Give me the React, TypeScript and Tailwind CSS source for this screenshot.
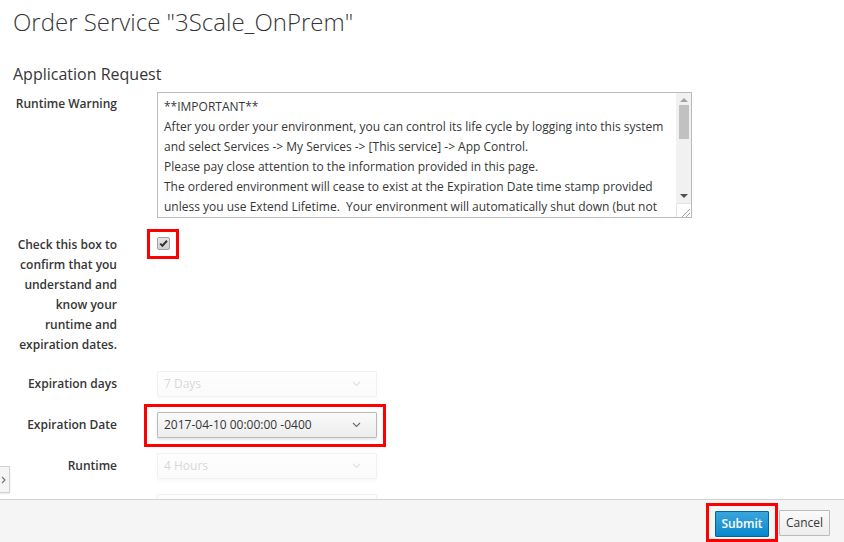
import React from "react";

function Chevron({ color = "#6b6b6b" }: { color?: string }) {
  return (
    <svg width="9" height="6" viewBox="0 0 9 6" fill="none">
      <path d="M1 1l3.5 3.5L8 1" stroke={color} strokeWidth="1.1" />
    </svg>
  );
}

function Select({ value, faded }: { value: string; faded?: boolean }) {
  return (
    <div
      className={
        "flex h-[26px] w-[220px] items-center justify-between rounded-[1px] border border-[#bbbbbb] bg-gradient-to-b from-[#fafafa] to-[#ededed] pl-[6px] pr-[15px] text-[12px] text-[#363636] shadow-[0_2px_3px_rgba(3,3,3,0.1)] " +
        (faded ? "opacity-20" : "")
      }
    >
      <span>{value}</span>
      <Chevron />
    </div>
  );
}

export default function App() {
  const lines = [
    "**IMPORTANT**",
    "After you order your environment, you can control its life cycle by logging into this system",
    "and select Services -> My Services -> [This service] -> App Control.",
    "Please pay close attention to the information provided in this page.",
    "The ordered environment will cease to exist at the Expiration Date time stamp provided",
    "unless you use Extend Lifetime.  Your environment will automatically shut down (but not",
  ];
  return (
    <div className="relative h-[542px] w-[844px] overflow-hidden bg-white font-['Open_Sans',sans-serif] text-[#363636]">
      <div className="px-[13px]">
        <h1 className="pt-[6px] text-[24px] font-light leading-[32px] text-[#363636]">
          Order Service "3Scale_OnPrem"
        </h1>
        <h2 className="mt-[26px] text-[16px] leading-[20px]">Application Request</h2>

        <div className="mt-[8px] grid grid-cols-[104px_1fr] gap-x-[40px]">
          {/* Runtime warning */}
          <div className="pt-[2px] text-right text-[12px] font-semibold leading-[20px]">
            Runtime Warning
          </div>
          <div className="relative h-[126px] w-[535px] overflow-hidden border border-[#bbbbbb] bg-white">
            <div className="whitespace-pre pl-[6px] pt-[4px] text-[12px] leading-[20px] text-[#363636]">
              {lines.map((l, i) => (
                <div key={i}>{l}</div>
              ))}
            </div>
            {/* scrollbar */}
            <div className="absolute right-0 top-0 flex h-[110px] w-[15px] flex-col items-center bg-[#f1f1f1]">
              <div className="mt-[5px] h-0 w-0 border-x-[4px] border-b-[4px] border-x-transparent border-b-[#a3a3a3]" />
              <div className="mt-[3px] h-[34px] w-[10px] bg-[#c1c1c1]" />
              <div className="mt-auto mb-[5px] h-0 w-0 border-x-[4px] border-t-[4px] border-x-transparent border-t-[#505050]" />
            </div>
            <div className="absolute bottom-0 right-0 h-[14px] w-[15px] border-l border-t border-[#e5e5e5] bg-white">
              <svg width="15" height="14" viewBox="0 0 15 14" className="absolute left-0 top-0">
                <path d="M13 5L5 13M13 9L9 13" stroke="#888" strokeWidth="0.8" />
              </svg>
            </div>
          </div>

          {/* Checkbox */}
          <div className="mt-[17px] text-right text-[12px] font-semibold leading-[20px]">
            Check this box to
            <br />
            confirm that you
            <br />
            understand and
            <br />
            know your
            <br />
            runtime and
            <br />
            expiration dates.
          </div>
          <div className="mt-[19px]">
            <div className="relative h-[13px] w-[13px] rounded-[2px] border border-[#a0a0a0] bg-gradient-to-b from-[#e6e6e6] to-[#d0d0d0]">
              <svg width="11" height="11" viewBox="0 0 11 11" className="absolute left-0 top-0">
                <path d="M2.2 5.6l2.2 2.2 4.6-5" stroke="#333" strokeWidth="2" fill="none" />
              </svg>
              <div className="absolute -left-[11px] -top-[9px] h-[30px] w-[32px] border-[3px] border-[#ff0000]" />
            </div>
          </div>

          {/* Expiration days */}
          <div className="mt-[16px] flex h-[26px] items-center justify-end text-[12px] font-semibold">
            Expiration days
          </div>
          <div className="mt-[16px]">
            <Select value="7 Days" faded />
          </div>

          <div className="mt-[15px] flex h-[26px] items-center justify-end text-[12px] font-semibold">
            Expiration Date
          </div>
          <div className="mt-[15px]">
            <div className="relative w-[220px]">
              <Select value="2017-04-10 00:00:00 -0400" />
              <div className="absolute -left-[13px] -right-[9px] -top-[8px] -bottom-[9px] border-[3px] border-[#ff0000]" />
            </div>
          </div>

          <div className="mt-[15px] flex h-[26px] items-center justify-end text-[12px] font-semibold">
            Runtime
          </div>
          <div className="mt-[15px]">
            <Select value="4 Hours" faded />
          </div>

          <div className="mt-[15px] h-[26px]" />
          <div className="mt-[15px]">
            <Select value="" faded />
          </div>
        </div>
      </div>

      {/* left drawer tab */}
      <div className="absolute left-[-18px] top-[466px] flex h-[27px] w-[28px] items-center justify-end border border-[#d1d1d1] bg-[#f5f5f5] pr-[2px] shadow-[0_1px_2px_rgba(0,0,0,0.1)]">
        <svg width="6" height="8" viewBox="0 0 6 8">
          <path d="M1 1l3 3-3 3" stroke="#777" strokeWidth="1.2" fill="none" />
        </svg>
      </div>

      {/* footer */}
      <div className="absolute bottom-0 left-0 right-0 flex h-[43px] items-start justify-end gap-[10px] border-t border-[#d1d1d1] bg-[#f5f5f5] pr-[14px] pt-[10px]">
        <div className="relative">
          <button className="h-[26px] w-[54px] rounded-[1px] border border-[#00659c] bg-gradient-to-b from-[#39a5dc] to-[#0088ce] text-[12px] font-semibold text-white">
            Submit
          </button>
          <div className="absolute -left-[9px] -right-[9px] -top-[7px] -bottom-[5px] border-[3px] border-[#ff0000]" />
        </div>
        <button className="h-[26px] w-[51px] rounded-[1px] border border-[#bbbbbb] bg-gradient-to-b from-[#fafafa] to-[#ededed] text-[12px] font-normal text-[#363636]">
          Cancel
        </button>
      </div>
    </div>
  );
}
